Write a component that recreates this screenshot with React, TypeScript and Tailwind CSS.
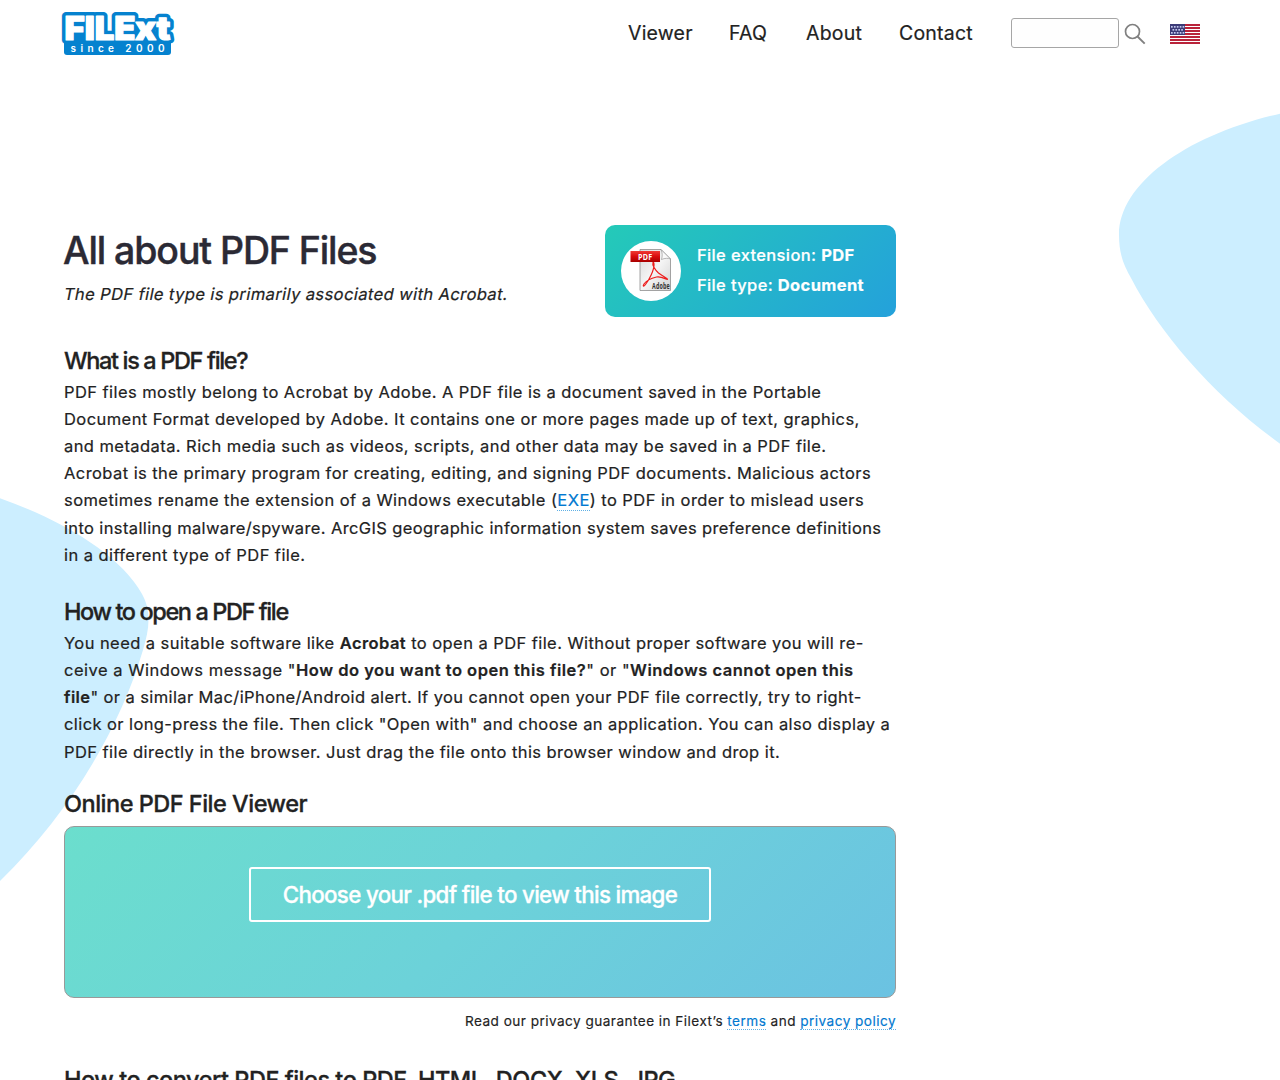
import React from "react";

const link = "text-[#0078d0] border-b border-dotted border-[#5fb0e5]";
const heading = "whitespace-nowrap text-[23.5px] font-medium leading-[30px] [-webkit-text-stroke:0.3px_currentColor]";
const prose = "text-[16.5px] leading-[27.2px] tracking-[0.43px] [-webkit-text-stroke:0.2px_currentColor]";

function Line({ children, className = "" }: { children: React.ReactNode; className?: string }) {
  return <span className={`block whitespace-nowrap ${className}`}>{children}</span>;
}

function Blobs() {
  return (
    <svg className="absolute inset-0" width="1280" height="1080" viewBox="0 0 1280 1080" fill="#cceeff" aria-hidden="true">
      <path d="M1280 113.7C1190 134 1119 182 1119 235C1119 256 1125 267 1131 278C1160 334 1215 397 1280 443.7Z" />
      <path d="M0 498.3C65 521 121 556 142 594C152 612 149 630 143 650C120 728 70 813 0 881Z" />
    </svg>
  );
}

function Logo() {
  return (
    <svg className="overflow-visible" width="114" height="48" viewBox="0 0 114 48" role="img" aria-label="FILExt since 2000">
      <defs>
        <g id="wordmark" fontFamily="Inter, sans-serif" fontWeight="900" fontSize="32.5" strokeLinejoin="round">
          <text x="3.500" y="29.500" textLength="71" lengthAdjust="spacingAndGlyphs">FILE</text>
          <text x="74" y="29.500" textLength="35.500" lengthAdjust="spacingAndGlyphs">xt</text>
        </g>
      </defs>
      <rect x="3" y="26" width="107" height="19" rx="3" fill="#0582cf" />
      <use href="#wordmark" fill="#0582cf" stroke="#0582cf" strokeWidth="8" />
      <use href="#wordmark" fill="#fff" stroke="#fff" strokeWidth="1.200" />
      <text x="9.500" y="42" fontFamily="Inter, sans-serif" fontWeight="600" fontSize="10" fill="#fff" textLength="94" lengthAdjust="spacing">since 2000</text>
    </svg>
  );
}

function Flag() {
  const stars = [[3, 5, 1], [6, 4, 2.5], [9, 5, 1]];
  return (
    <svg width="30" height="20" viewBox="0 0 30 20">
      <rect width="30" height="20" fill="#fff" />
      {[0, 3, 6, 9, 12, 15, 18].map((y) => (
        <rect key={y} y={y} width="30" height="2" fill="#b9233a" />
      ))}
      <rect width="15" height="11" fill="#3c3b77" />
      {stars.map(([y, n, x]) =>
        Array.from({ length: n }, (_, i) => (
          <rect key={`${y}-${i}`} x={x + i * 2.9} y={y - 1} width="1.700" height="1.700" fill="#c3c9ee" />
        ))
      )}
    </svg>
  );
}

function PdfIcon() {
  return (
    <svg width="60" height="60" viewBox="0 0 60 60">
      <defs>
        <linearGradient id="page" x1="0" y1="0" x2="1" y2="1">
          <stop offset="0" stopColor="#dadada" />
          <stop offset="0.500" stopColor="#f5f5f5" />
          <stop offset="1" stopColor="#d2d2d2" />
        </linearGradient>
        <linearGradient id="band" x1="0" y1="0" x2="0" y2="1">
          <stop offset="0" stopColor="#f03a35" />
          <stop offset="0.500" stopColor="#d90b0b" />
          <stop offset="1" stopColor="#a80000" />
        </linearGradient>
      </defs>
      <circle cx="30" cy="30" r="30" fill="#fff" />
      <path d="M19 8.500H40L49.500 18V49.500H19Z" fill="url(#page)" stroke="#8e8e8e" strokeWidth="0.800" />
      <path d="M40 8.500C41.500 12 41.500 15 40.500 18.500C44 17 47 17 49.500 18Z" fill="#fafafa" stroke="#999" strokeWidth="0.700" />
      <path d="M32 21.500C31 24 34 29 37.500 32C42 35.500 47 37.500 46.500 38.300C45.500 39 41 35 35.500 36C29 37.500 25 40 23 43C21.500 45.500 22.500 46 24.500 43.500C28.500 38.500 33 29 33 24C33 22 32.500 21 32 21.500Z" fill="none" stroke="#ed1c1c" strokeWidth="1.200" />
      <rect x="9.500" y="10" width="29.500" height="11" fill="url(#band)" />
      <text x="17" y="18.800" fontFamily="Open Sans, sans-serif" fontWeight="700" fontSize="9" fill="#fff" textLength="14.500" lengthAdjust="spacingAndGlyphs">PDF</text>
      <text x="31" y="48" fontFamily="Open Sans, sans-serif" fontWeight="700" fontSize="8.800" fill="#333" textLength="18" lengthAdjust="spacingAndGlyphs">Adobe</text>
    </svg>
  );
}

export default function App() {
  return (
    <div className="relative h-[1080px] w-[1280px] overflow-hidden bg-white font-['Inter',sans-serif] text-[#222]">
      <Blobs />
      <div className="relative">
        <header className="flex h-[66px] items-start pl-[61px] pr-20">
          <div className="mt-[10px]"><Logo /></div>
          <nav className="ml-auto flex h-[66px] items-center pt-px text-[19.5px] leading-none tracking-[0.2px] [-webkit-text-stroke:0.2px_currentColor]">
            <a className="mr-[37px] w-16">Viewer</a>
            <a className="mr-[37px] w-10">FAQ</a>
            <a className="mr-[37px] w-14">About</a>
            <a className="mr-[37px] w-[75px]">Contact</a>
          </nav>
          <div className="mt-[18px] h-[30px] w-[108px] rounded-[3px] border border-[#a6a6a6] bg-[#fefefe]" />
          <svg className="ml-[5px] mt-[23px]" width="22" height="22" viewBox="0 0 22 22" fill="none" stroke="#808080">
            <circle cx="8.500" cy="8.500" r="7" strokeWidth="1.700" />
            <path d="M13.500 13.500L20.700 20.700" strokeWidth="1.900" />
          </svg>
          <div className="ml-6 mt-6"><Flag /></div>
        </header>

        <main className="ml-16 w-[832px]">
          <section className="mt-[159px] flex h-[92px] justify-between">
            <div>
              <h1 className="-ml-px mt-[3px] whitespace-nowrap text-[37.5px] font-medium leading-[46px] tracking-[-1.1px] text-[#2b2a35] [-webkit-text-stroke:0.4px_currentColor]">All about PDF Files</h1>
              <p className="mt-[7px] -skew-x-[11deg] whitespace-nowrap text-[16.5px] leading-[27px] tracking-[0.41px] [-webkit-text-stroke:0.2px_currentColor]">The PDF file type is primarily associated with Acrobat.</p>
            </div>
            <aside className="flex w-[291px] items-center gap-4 rounded-[10px] bg-[linear-gradient(135deg,#24cab8,#24a1db)] pl-4 text-[16.5px] font-medium leading-[30px] tracking-[0.36px] text-white">
              <PdfIcon />
              <div className="whitespace-nowrap pb-[2px] [-webkit-text-stroke:0.2px_currentColor]">
                <p>File extension: <b className="font-bold">PDF</b></p>
                <p>File type: <b className="font-bold">Document</b></p>
              </div>
            </aside>
          </section>

          <h2 className={`mt-[29px] tracking-[-1.35px] ${heading}`}>What is a PDF file?</h2>
          <p className={`mt-[2.6px] ${prose}`}>
            <Line>PDF files mostly belong to Acrobat by Adobe. A PDF file is a document saved in the Portable</Line>
            <Line>Document Format developed by Adobe. It contains one or more pages made up of text, graphics,</Line>
            <Line>and metadata. Rich media such as videos, scripts, and other data may be saved in a PDF file.</Line>
            <Line>Acrobat is the primary program for creating, editing, and signing PDF documents. Malicious actors</Line>
            <Line>sometimes rename the extension of a Windows executable (<a className={link}>EXE</a>) to PDF in order to mislead users</Line>
            <Line className="tracking-[0.37px]">into installing malware/spyware. ArcGIS geographic information system saves preference definitions</Line>
            <Line>in a different type of PDF file.</Line>
          </p>

          <h2 className={`mt-[28px] tracking-[-1.4px] ${heading}`}>How to open a PDF file</h2>
          <p className={`mt-[2.8px] ${prose}`}>
            <Line>You need a suitable software like <b className="font-semibold">Acrobat</b> to open a PDF file. Without proper software you will re-</Line>
            <Line className="tracking-[0.5px]">ceive a Windows message "<b className="font-semibold">How do you want to open this file?</b>" or "<b className="font-semibold">Windows cannot open this</b></Line>
            <Line className="tracking-[0.39px]"><b className="font-semibold">file</b>" or a similar Mac/iPhone/Android alert. If you cannot open your PDF file correctly, try to right-</Line>
            <Line className="tracking-[0.41px]">click or long-press the file. Then click "Open with" and choose an application. You can also display a</Line>
            <Line>PDF file directly in the browser. Just drag the file onto this browser window and drop it.</Line>
          </p>

          <h2 className={`mt-[22.7px] tracking-[-0.5px] ${heading}`}>Online PDF File Viewer</h2>
          <div className="mt-[7px] flex h-[172px] items-start justify-center rounded-[10px] border border-[#999] bg-[linear-gradient(135deg,#6bdecd,#6cd2d9_50%,#6bc2e2)] pt-10">
            <button className="h-[55px] w-[462px] whitespace-nowrap rounded-[3px] border-2 border-white pt-px text-[22.3px] font-medium tracking-[-0.67px] text-white [-webkit-text-stroke:0.3px_currentColor]">Choose your .pdf file to view this image</button>
          </div>
          <p className="mt-[12px] whitespace-nowrap text-right text-[13.6px] leading-[22px] tracking-[0.46px] [-webkit-text-stroke:0.15px_currentColor]">
            Read our privacy guarantee in Filext’s <a className={link}>terms</a> and <a className={link}>privacy policy</a>
          </p>
          <h2 className={`mt-[33px] tracking-[-0.47px] ${heading}`}>How to convert PDF files to PDF, HTML, DOCX, XLS, JPG</h2>
        </main>
      </div>
    </div>
  );
}
